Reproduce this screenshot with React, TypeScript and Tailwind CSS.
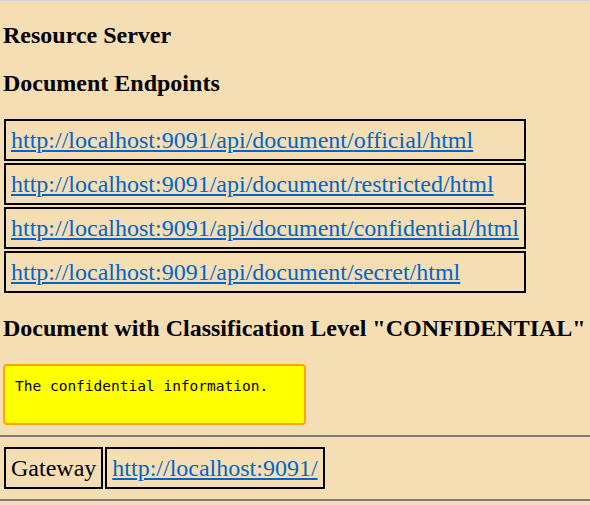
import React from 'react';

const endpoints = ['official', 'restricted', 'confidential', 'secret'];

const App = () => {
  return (
    <div className="min-h-screen w-full overflow-hidden bg-[#f5deb3] border-t border-[#d3d3d3] font-['Liberation_Serif',serif] text-black">
      <div className="px-[2px]">
        <h3 className="pl-[1px] pt-[20px] text-[24px] font-bold leading-[28px]">Resource Server</h3>
        <h3 className="pl-[1px] pt-[20px] text-[24px] font-bold leading-[28px]">Document Endpoints</h3>

        {/* endpoint links */}
        <table className="mt-[20px] border-separate border-spacing-[2px]">
          <tbody>
            {endpoints.map((e) => (
              <tr key={e}>
                <td className="border-2 border-black px-[5px] py-[5px] text-[24px] leading-[28px]">
                  <a href="#" className="text-[#0066cc] underline">
                    http://localhost:9091/api/document/{e}/html
                  </a>
                </td>
              </tr>
            ))}
          </tbody>
        </table>

        <h3 className="pl-[1px] pt-[19px] text-[24px] font-bold leading-[28px] whitespace-nowrap">
          Document with Classification Level "CONFIDENTIAL"
        </h3>

        <pre className="ml-[1px] mt-[22px] w-[303px] h-[61px] bg-[#ffff00] border-2 border-[#ffa500] rounded-[4px] px-[10px] pt-[12px] font-['DejaVu_Sans_Mono',monospace] text-[14.5px] leading-[17px]">
          The confidential information.
        </pre>
      </div>

      <hr className="mt-[10px] border-t-2 border-[#7a7a7a]" />

      <div className="px-[2px]">
        <table className="mt-[8px] border-separate border-spacing-[2px]">
          <tbody>
            <tr>
              <td className="border-2 border-black px-[5px] py-[5px] text-[24px] leading-[28px]">Gateway</td>
              <td className="border-2 border-black px-[5px] py-[5px] text-[24px] leading-[28px]">
                <a href="#" className="text-[#0066cc] underline">http://localhost:9091/</a>
              </td>
            </tr>
          </tbody>
        </table>
      </div>

      <hr className="mt-[8px] border-t-2 border-[#7a7a7a]" />
    </div>
  );
};

export default App;
